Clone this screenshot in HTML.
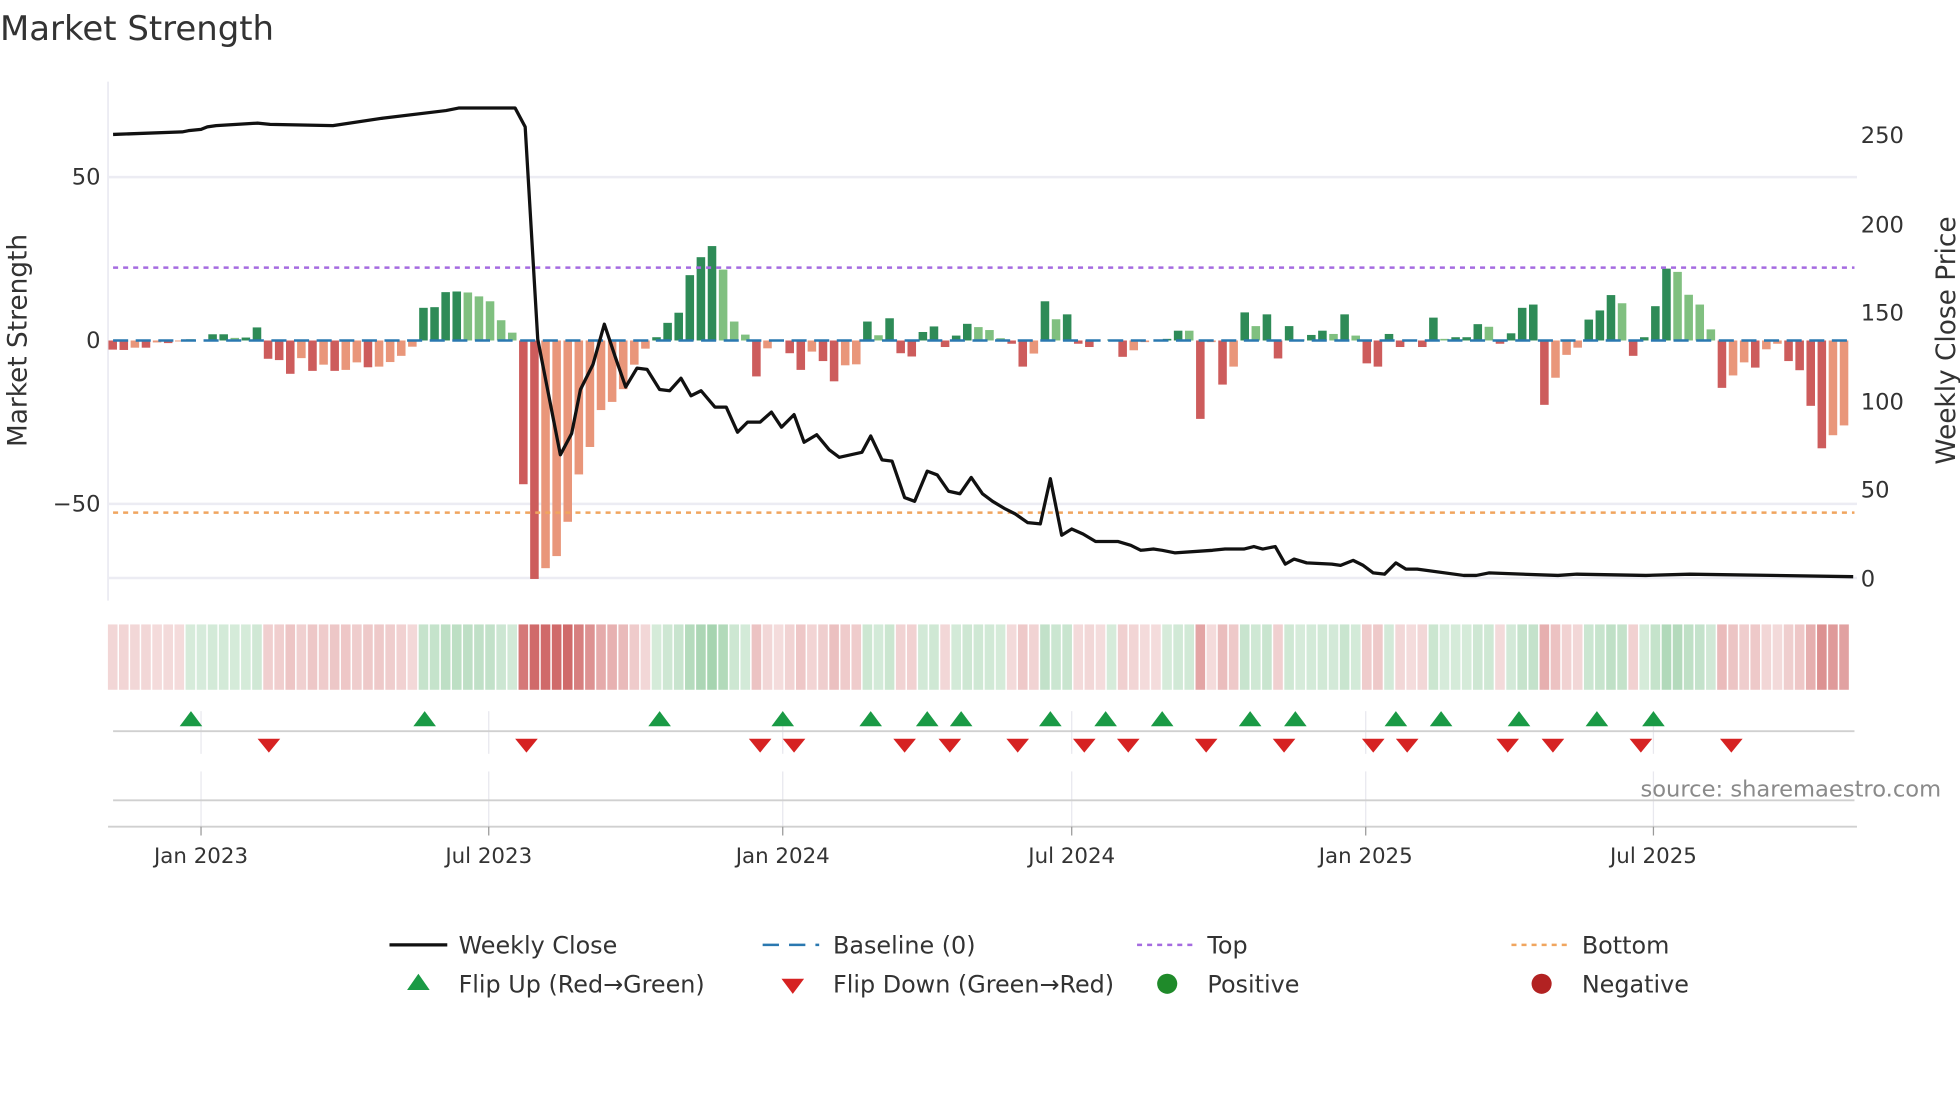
<!DOCTYPE html>
<html><head><meta charset="utf-8"><style>
html,body{margin:0;padding:0;background:#fff;}
svg{display:block;font-family:"DejaVu Sans","Liberation Sans",sans-serif;}
</style></head><body>
<svg id="s" width="1960" height="1102" viewBox="0 0 1560 877.1" xmlns="http://www.w3.org/2000/svg">
<rect width="1560" height="878" fill="#fff"/>
<text x="0" y="32" font-size="27" fill="#333">Market Strength</text>
<g id="grid">
<line x1="86" y1="141" x2="1478" y2="141" stroke="#ececf3" stroke-width="2"/>
<line x1="86" y1="401" x2="1478" y2="401" stroke="#ececf3" stroke-width="2"/>
<line x1="86" y1="460" x2="1478" y2="460" stroke="#ececf3" stroke-width="2"/>
<line x1="86" y1="65" x2="86" y2="478" stroke="#ececf3" stroke-width="1.5"/>
</g>
<g id="bars"></g>
<line x1="90" y1="271" x2="1476" y2="271" stroke="#2a78b0" stroke-width="2" stroke-dasharray="12,6"/>
<line x1="90" y1="213" x2="1476" y2="213" stroke="#a56be0" stroke-width="2" stroke-dasharray="4,4"/>
<line x1="90" y1="408" x2="1476" y2="408" stroke="#f0a55f" stroke-width="2" stroke-dasharray="4,4"/>
<polyline id="price" fill="none" stroke="#111" stroke-width="2.6" stroke-linejoin="round"/>
<g font-size="18" fill="#333">
<text x="80" y="147" text-anchor="end">50</text>
<text x="80" y="277" text-anchor="end">0</text>
<text x="80" y="407" text-anchor="end">−50</text>
<text x="1481" y="114">250</text>
<text x="1481" y="185">200</text>
<text x="1481" y="255">150</text>
<text x="1481" y="326">100</text>
<text x="1481" y="396">50</text>
<text x="1481" y="467">0</text>
</g>
<text transform="translate(21,271) rotate(-90)" font-size="21" fill="#333" text-anchor="middle">Market Strength</text>
<text transform="translate(1556,271) rotate(-90)" font-size="21" fill="#333" text-anchor="middle">Weekly Close Price</text>
<g id="heat"></g>
<g stroke="#e8e8ee" stroke-width="1">
<line x1="160" y1="566" x2="160" y2="600"/><line x1="389" y1="566" x2="389" y2="600"/><line x1="623" y1="566" x2="623" y2="600"/><line x1="853" y1="566" x2="853" y2="600"/><line x1="1087" y1="566" x2="1087" y2="600"/><line x1="1316" y1="566" x2="1316" y2="600"/>
<line x1="160" y1="614" x2="160" y2="658"/><line x1="389" y1="614" x2="389" y2="658"/><line x1="623" y1="614" x2="623" y2="658"/><line x1="853" y1="614" x2="853" y2="658"/><line x1="1087" y1="614" x2="1087" y2="658"/><line x1="1316" y1="614" x2="1316" y2="658"/>
</g>
<line x1="90" y1="582" x2="1476" y2="582" stroke="#d0d0d0" stroke-width="1.5"/>
<line x1="90" y1="637" x2="1476" y2="637" stroke="#d0d0d0" stroke-width="1.5"/>
<line x1="86" y1="658" x2="1478" y2="658" stroke="#d0d0d0" stroke-width="1.5"/>
<g id="marks"></g>
<g stroke="#999" stroke-width="1"><line x1="160" y1="658" x2="160" y2="665"/><line x1="389" y1="658" x2="389" y2="665"/><line x1="623" y1="658" x2="623" y2="665"/><line x1="853" y1="658" x2="853" y2="665"/><line x1="1087" y1="658" x2="1087" y2="665"/><line x1="1316" y1="658" x2="1316" y2="665"/></g>
<g font-size="17" fill="#333" text-anchor="middle">
<text x="160" y="687">Jan 2023</text><text x="389" y="687">Jul 2023</text><text x="623" y="687">Jan 2024</text><text x="853" y="687">Jul 2024</text><text x="1087" y="687">Jan 2025</text><text x="1316" y="687">Jul 2025</text>
</g>
<text x="1545" y="634" font-size="18" fill="#8a8a8a" text-anchor="end">source: sharemaestro.com</text>
<g font-size="19" fill="#333">
<line x1="310" y1="752" x2="356" y2="752" stroke="#111" stroke-width="2.6"/><text x="365" y="759">Weekly Close</text>
<line x1="607" y1="752" x2="652" y2="752" stroke="#2a78b0" stroke-width="2" stroke-dasharray="13,8"/><text x="663" y="759">Baseline (0)</text>
<line x1="905" y1="752" x2="950" y2="752" stroke="#a56be0" stroke-width="2" stroke-dasharray="4,4"/><text x="961" y="759">Top</text>
<line x1="1203" y1="752" x2="1248" y2="752" stroke="#f0a55f" stroke-width="2" stroke-dasharray="4,4"/><text x="1259" y="759">Bottom</text>
<polygon points="324,788 342,788 333,775" fill="#1a9a45"/><text x="365" y="790">Flip Up (Red→Green)</text>
<polygon points="622,779 640,779 631,791" fill="#d62222"/><text x="663" y="790">Flip Down (Green→Red)</text>
<circle cx="929" cy="783" r="8" fill="#1f8a2a"/><text x="961" y="790">Positive</text>
<circle cx="1227" cy="783" r="8" fill="#b22222"/><text x="1259" y="790">Negative</text>
</g>
</svg>
<script>
var NS="http://www.w3.org/2000/svg";
function el(p,t,a){var e=document.createElementNS(NS,t);for(var k in a)e.setAttribute(k,a[k]);p.appendChild(e);return e;}
var D="R-2.8 R-2.9 O-2.2 R-2.2 O-0.6 R-0.8 O-0.3 L0.4 Z0 G1.9 G1.9 L0.8 G0.9 G4 R-5.6 R-6 R-10.2 O-5.4 R-9.3 O-7.4 R-9.3 O-9 O-6.7 R-8.2 O-8 O-6.6 O-4.7 O-1.9 G10 G10.2 G14.8 G15 L14.7 L13.5 L12 L6.2 L2.4 R-44 "+
"R-73 O-69.7 O-66 O-55.5 O-41 O-32.6 O-21.3 O-18.8 O-14.9 O-7.4 O-2.5 G1 G5.4 G8.5 G20 G25.5 G28.9 L21.7 L5.8 L1.8 R-11 O-2.4 Z0 R-3.9 R-9 O-3.4 R-6.3 R-12.5 O-7.6 O-7.3 G5.8 L1.6 G6.8 R-3.9 R-4.9 G2.6 G4.3 R-2 G1.5 G5.1 L4.1 L3.2 L0.7 "+
"R-1 R-8 O-4 G12 L6.5 G8 R-1 R-2 Z0 G0.3 R-5 O-3 O-0.5 Z0 G0.5 G3 L3 R-24 O-0.5 R-13.5 O-8 G8.6 L4.4 G8 R-5.5 G4.4 G0.3 G1.7 G3 L2 G8 L1.5 R-7 R-8 G2 R-2 Z0 R-2 G7 L0.5 G1 G1 G5 "+
"L4.2 R-1 G2.2 G10 G11 R-19.7 O-11.4 O-4.4 O-2.2 G6.4 G9.2 G13.9 L11.4 R-4.7 G1 G10.5 G22 L21 L14 L11 L3.4 R-14.5 O-10.7 O-6.7 R-8.3 O-2.7 O-1 R-6.3 R-9.1 R-20 R-33 O-29 O-26";
var items=D.split(" ");
var C={R:'#cd5c5c',O:'#e9967a',G:'#2e8b57',L:'#80c080'};
var n=items.length,x0=89.7,x1=1467.7,dx=(x1-x0)/(n-1);
var B=document.getElementById('bars'),H=document.getElementById('heat');
var sign=-1;
for(var i=0;i<n;i++){
 var t=items[i][0],val=parseFloat(items[i].slice(1)),x=x0+i*dx;
 if(t!=='Z'&&val!==0){
  el(B,'rect',{x:x-3.4,y:Math.min(271-val*2.6,271),width:6.8,height:Math.abs(val*2.6),fill:C[t]});
  sign=val>0?1:-1;
 }
 var a=Math.min(Math.abs(val)/50,1);
 var hc=sign>0?'rgba(70,165,90,'+(0.22+a*0.45)+')':'rgba(200,80,80,'+(0.2+a*0.65)+')';
 el(H,'rect',{x:x-dx/2+0.6,y:497,width:dx-1.2,height:52,fill:hc});
}
var P=[[90,107],[145,105],[150,104],[160,103],[165,101],[172,100],[205,98],[215,99],[265,100],[305,94],[355,88],[365,86],[410,86],[418,101],[428,270],[446,362],[455,345],[462,310],[472,290],[481,258],[490,285],[498,308],[507,293],[515,294],[525,310],[533,311],[542,301],[550,315],[558,311],[569,324],[578,324],[587,344],[595,336],[605,336],[614,328],[622,340],[632,330],[640,352],[650,346],[660,358],[668,364],[686,360],[693,347],[702,366],[710,367],[720,396],[728,399],[738,375],[746,378],[755,391],[764,393],[773,380],[782,393],[790,399],[800,405],[808,409],[818,416],[828,417],[836,381],[845,426],[853,421],[862,425],[872,431],[890,431],[900,434],[908,438],[918,437],[925,438],[935,440],[965,438],[975,437],[990,437],[998,435],[1005,437],[1015,435],[1023,449],[1030,445],[1040,448],[1060,449],[1067,450],[1077,446],[1085,450],[1093,456],[1102,457],[1111,448],[1119,453],[1128,453],[1165,458],[1175,458],[1185,456],[1240,458],[1255,457],[1310,458],[1345,457],[1475,459]];
document.getElementById('price').setAttribute('points',P.map(function(p){return p.join(',')}).join(' '));
var M=document.getElementById('marks');
[152,338,525,623,693,738,765,836,880,925,995,1031,1111,1147,1209,1271,1316].forEach(function(x){el(M,'polygon',{points:(x-9)+',578 '+(x+9)+',578 '+x+',566',fill:'#1a9a45'});});
[214,419,605,632,720,756,810,863,898,960,1022,1093,1120,1200,1236,1306,1378].forEach(function(x){el(M,'polygon',{points:(x-9)+',588 '+(x+9)+',588 '+x+',599',fill:'#d62222'});});
</script>
</body></html>
